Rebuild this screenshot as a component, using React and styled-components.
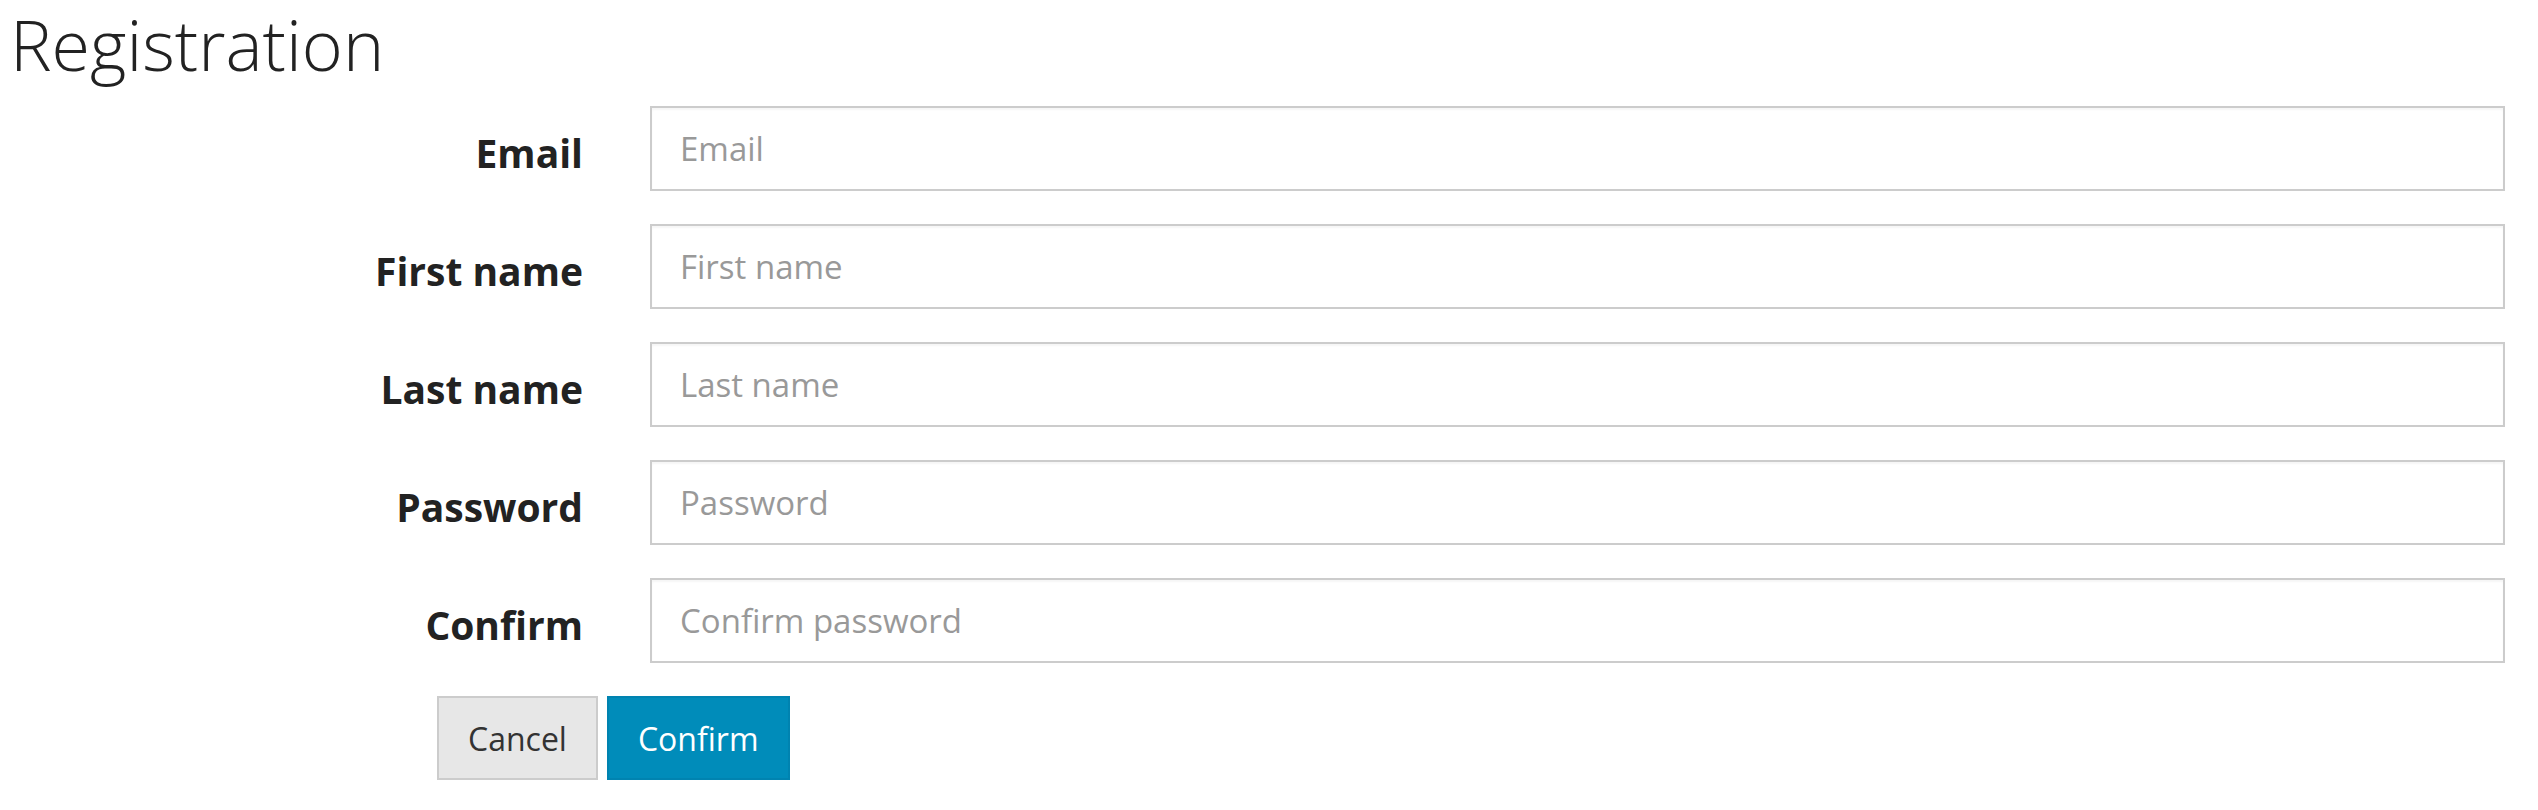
import React from 'react';
import styled, { createGlobalStyle } from 'styled-components';

const GlobalStyle = createGlobalStyle`
    html, body {
        margin: 0;
        padding: 0;
        background: #ffffff;
    }
    body {
        font-family: 'Open Sans', 'Noto Sans', sans-serif;
        color: #222222;
    }
`;

const Page = styled.div`
    padding: 9px 33px 0 10px;
`;

const Title = styled.h1`
    margin: 0 0 27px 0;
    font-size: 70px;
    line-height: 70px;
    font-weight: 300;
    color: #222222;
`;

const Form = styled.form`
    display: grid;
    grid-template-columns: 573px 1fr;
    column-gap: 67px;
    row-gap: 33px;
`;

const Label = styled.label`
    text-align: right;
    font-size: 39px;
    line-height: 50px;
    font-weight: 700;
    padding-top: 22px;
    color: #222222;
`;

const Input = styled.input`
    box-sizing: border-box;
    width: 100%;
    height: 85px;
    padding: 15px 28px;
    font-family: 'Open Sans', 'Noto Sans', sans-serif;
    font-size: 33px;
    line-height: 50px;
    color: #555555;
    background: #ffffff;
    border: 2px solid #cccccc;
    border-radius: 0;
    box-shadow: inset 0 2px 2px rgba(0, 0, 0, 0.04);
    outline: none;

    &::placeholder {
        color: #999999;
    }
`;

const Actions = styled.div`
    grid-column: 1 / span 2;
    display: flex;
    gap: 9px;
    padding-left: 427px;
`;

const Button = styled.button`
    box-sizing: border-box;
    height: 84px;
    padding: 0 29px;
    font-family: 'Open Sans', 'Noto Sans', sans-serif;
    font-size: 32px;
    font-weight: 400;
    border-radius: 0;
    cursor: pointer;
    border: 2px solid ${p => (p.$primary ? '#0083b0' : '#cccccc')};
    background: ${p => (p.$primary ? '#008cba' : '#e7e7e7')};
    color: ${p => (p.$primary ? '#ffffff' : '#333333')};
`;

const fields = [
    { id: 'email', label: 'Email', placeholder: 'Email', type: 'email' },
    { id: 'first', label: 'First name', placeholder: 'First name', type: 'text' },
    { id: 'last', label: 'Last name', placeholder: 'Last name', type: 'text' },
    { id: 'password', label: 'Password', placeholder: 'Password', type: 'password' },
    { id: 'confirm', label: 'Confirm', placeholder: 'Confirm password', type: 'password' },
];

function App() {
    return (
        <>
            <GlobalStyle />
            <Page>
                <Title>Registration</Title>
                <Form onSubmit={e => e.preventDefault()}>
                    {fields.map(f => (
                        <React.Fragment key={f.id}>
                            <Label htmlFor={f.id}>{f.label}</Label>
                            <Input id={f.id} type={f.type} placeholder={f.placeholder} />
                        </React.Fragment>
                    ))}
                    <Actions>
                        <Button type="button">Cancel</Button>
                        <Button type="submit" $primary>Confirm</Button>
                    </Actions>
                </Form>
            </Page>
        </>
    );
}

export default App;
